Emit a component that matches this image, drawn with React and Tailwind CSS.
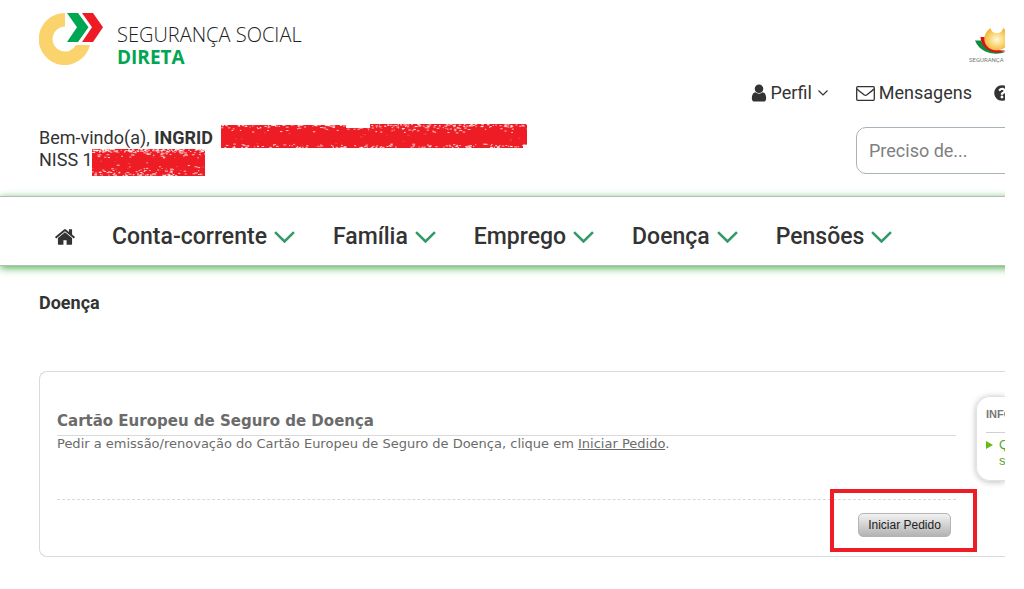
import React from "react";
import { FaQuestionCircle } from "react-icons/fa";

const menuItems = ["Conta-corrente", "Família", "Emprego", "Doença", "Pensões"];

// small repeatable generator, so the brush texture is the same on each render
const makeSpecks = (width, height, topBand, bottomBand, count, seed) => {
  let s = seed;
  const next = () => {
    s = (s * 16807) % 2147483647;
    return s / 2147483647;
  };
  return Array.from({ length: count }, () => {
    const x = next() * width;
    const zone = next();
    const depth = next() * next();
    let y = next() * height;
    if (zone < 0.6) y = depth * topBand;
    else if (zone < 0.9) y = height - 1 - depth * bottomBand;
    return { x, y, w: 1 + next() * 2, o: zone < 0.9 ? 0.75 : 0.18 };
  });
};

const nameSpecks = makeSpecks(306, 24, 9, 4, 400, 71);
const numberSpecks = makeSpecks(113, 27, 9, 13, 300, 29);

const Specks = ({ items }) =>
  items.map((p, i) => (
    <rect key={i} x={p.x} y={p.y} width={p.w} height="1" fill="#fff" opacity={p.o} />
  ));

const Logo = () => (
  <svg width="64" height="52" viewBox="0 0 64 52" className="shrink-0" aria-hidden="true">
    <path d="M26 0A26 26 0 1 0 51 32H37A12.5 12.5 0 1 1 26 13.500Z" fill="#fbd36d" />
    <path d="M28 0h11l10.500 14.200L39 29H28l10-14.800Z" fill="#00a651" />
    <path d="M43 0h11l10 14.200L54 29H43l10-14.800Z" fill="#ed1c24" />
  </svg>
);

const Emblem = () => (
  <svg width="56" height="28" viewBox="0 0 56 28" className="block" aria-hidden="true">
    <defs>
      <radialGradient id="sun" cx="50%" cy="52%" r="55%">
        <stop offset="0" stopColor="#fff8dc" />
        <stop offset="0.45" stopColor="#fbdc85" />
        <stop offset="1" stopColor="#f4b02e" />
      </radialGradient>
    </defs>
    <path d="M0 13.500h6c3 8 9 12.500 25 11-5 2.500-13 3-19 .5C6 23 2 18.500 0 13.500Z" fill="#0a8f3c" />
    <path d="M5.500 10h5c1 8 6 14 20 13.500-4 2.500-10 3-15 .5C9 21.500 6 17 5.500 10Z" fill="#d5121b" />
    <path
      d="M15.500 1C9 6 8 12 10.500 17c4.500 8.500 18 8.500 22.500 0 2.500-5 1.500-11-5-16-1 3.500-2 5-6.200 5S16.500 4.500 15.500 1Z"
      fill="url(#sun)"
    />
  </svg>
);

const UserIcon = () => (
  <svg width="20" height="20" viewBox="0 0 1792 1792" fill="currentColor" aria-hidden="true">
    <path d="M1536 1399q0 109-62.500 187t-150.500 78h-854q-88 0-150.500-78t-62.500-187q0-85 8.500-160.500t31.500-152 58.500-131 94-89 134.500-34.500q131 128 313 128t313-128q76 0 134.500 34.500t94 89 58.500 131 31.500 152 8.500 160.500zm-256-887q0 159-112.500 271.500t-271.500 112.500-271.500-112.500-112.500-271.500 112.500-271.500 271.500-112.500 271.500 112.500 112.500 271.500z" />
  </svg>
);

const HomeIcon = () => (
  <svg width="22" height="22" viewBox="0 0 1792 1792" fill="currentColor" aria-hidden="true">
    <path d="M1472 992v480q0 26-19 45t-45 19h-384v-384h-256v384h-384q-26 0-45-19t-19-45v-480q0-1 .5-3t.5-3l575-474 575 474q1 2 1 6zm223-69l-62 74q-8 9-21 11h-3q-13 0-21-7l-692-577-692 577q-12 8-24 7-13-2-21-11l-62-74q-8-10-7-23.500t11-21.500l719-599q32-26 76-26t76 26l244 204v-195q0-14 9-23t23-9h192q14 0 23 9t9 23v408l219 182q10 8 11 21.500t-7 23.500z" />
  </svg>
);

const Chevron = ({ className, size }) => (
  <svg
    viewBox="0 0 20 12"
    width={size}
    className={className}
    fill="none"
    stroke="currentColor"
    strokeWidth="2.4"
    aria-hidden="true"
  >
    <path d="M1 1l9 9 9-9" />
  </svg>
);

const Envelope = () => (
  <svg
    width="19"
    height="15"
    viewBox="0 0 19 15"
    fill="none"
    stroke="currentColor"
    strokeWidth="1.3"
    aria-hidden="true"
  >
    <rect x="0.7" y="0.7" width="17.600" height="13.600" rx="1" />
    <path d="M1 3c3 3 5 4 7 5.700q1.500 1.200 3 0C13 7 15 6 18 3" />
  </svg>
);

const Header = () => (
  <header className="pl-[39px]">
    <div className="flex items-start justify-between pt-[13px]">
      <a href="#inicio" className="flex items-start gap-[14px]">
        <Logo />
        <span className="flex flex-col pt-2 font-['Open_Sans',sans-serif]">
          <span className="text-[20px] leading-7 font-light text-[#222]">SEGURANÇA SOCIAL</span>
          <span className="text-[19px] leading-4 font-bold text-[#00a651]">DIRETA</span>
        </span>
      </a>
      <div className="w-[36px] pt-[14px]">
        <div className="overflow-hidden pl-[6px]">
          <Emblem />
        </div>
        <span className="block text-[6px] leading-[10px] whitespace-nowrap text-[#777]">
          SEGURANÇA
        </span>
      </div>
    </div>

    <div className="-mr-[5px] flex items-center justify-end gap-7 pt-[17px] text-[18px] leading-[22px]">
      <button type="button" className="flex items-center gap-[2px]">
        <UserIcon />
        Perfil
        <Chevron size="10" className="ml-1" />
      </button>
      <a href="#mensagens" className="flex items-center gap-1">
        <Envelope />
        Mensagens
      </a>
      <a href="#ajuda" aria-label="Ajuda" className="-ml-[6px]">
        <FaQuestionCircle className="size-[16px]" />
      </a>
    </div>

    <div className="flex items-start justify-between pt-[23px]">
      <div className="text-[18px] leading-[22px]">
        <p className="relative w-fit">
          Bem-vindo(a), <strong className="font-bold">INGRID</strong>
          <svg
            width="306"
            height="24"
            className="absolute -top-[3px] left-full ml-2"
            aria-hidden="true"
          >
            <path d="M0 1H125V4H149V0H306V21H302V24H0Z" fill="#ee1c24" />
            <Specks items={nameSpecks} />
          </svg>
        </p>
        <p className="relative w-fit">
          NISS 1
          <svg
            width="113"
            height="27"
            className="absolute top-0 left-full -ml-px"
            aria-hidden="true"
          >
            <rect width="113" height="27" fill="#ee1c24" />
            <Specks items={numberSpecks} />
          </svg>
        </p>
      </div>
      <input
        type="search"
        aria-label="Pesquisa"
        placeholder="Preciso de..."
        className="-mr-[40px] h-[47px] w-[189px] rounded-[10px] border border-[#a9b4ba] px-3 text-[18px] placeholder:text-[#808080]"
      />
    </div>
  </header>
);

const Nav = () => (
  <nav className="relative -mr-4 mt-[22px] flex h-[70px] items-center border-y border-[#b3bdb8] bg-white pt-3 pl-[54px] text-[23px] font-medium shadow-[0_2px_8px_#4caf50]">
    <a href="#inicio" aria-label="Início" className="mr-9">
      <HomeIcon />
    </a>
    <ul className="flex items-center gap-[38px]">
      {menuItems.map((item) => (
        <li key={item}>
          <button type="button" className="flex items-center gap-[7px]">
            {item}
            <Chevron size="21" className="text-[#339966]" />
          </button>
        </li>
      ))}
    </ul>
  </nav>
);

const RequestPanel = () => (
  <section className="flex rounded-l-lg border border-r-0 border-[#d9d9d9] pl-[17px] font-['DejaVu_Sans',sans-serif] text-[#6b6b6b]">
    <div className="min-w-0 flex-1 pt-[39px] pb-[19px]">
      <h2 className="border-b border-[#d9d9d9] pb-[3px] text-[15px] leading-[21px] font-bold">
        Cartão Europeu de Seguro de Doença
      </h2>
      <p className="text-[13px] leading-[15px]">
        Pedir a emissão/renovação do Cartão Europeu de Seguro de Doença, clique em{" "}
        <a href="#pedido" className="underline">
          Iniciar Pedido
        </a>
        .
      </p>
      <div className="mt-12 flex justify-end border-t border-dashed border-[#d9d9d9] pt-[13px] pr-[5px]">
        <div className="relative">
          <button
            type="button"
            className="block h-6 w-[93px] rounded-[5px] border border-[#b5b5b5] bg-linear-to-b from-[#f2f2f2] to-[#b3b3b3] font-['Liberation_Sans',sans-serif] text-[12px] text-[#222]"
          >
            Iniciar Pedido
          </button>
          <span className="pointer-events-none absolute -top-[24px] -right-[26px] -bottom-[15px] -left-[28px] border-4 border-[#ee1c24]" />
        </div>
      </div>
    </div>

    <aside className="mt-[24px] ml-[20px] h-[85px] w-[29px] shrink-0 overflow-hidden rounded-l-[14px] border border-r-0 border-[#e2e2e2] pt-[9px] pl-[9px] font-['Liberation_Sans',sans-serif] text-[12px] whitespace-nowrap shadow-[0_1px_6px_#bbb]">
      <h3 className="border-b border-[#d0d0d0] pb-[10px] text-[11px] leading-4 font-bold text-[#777]">
        INFO
      </h3>
      <a href="#info" className="flex gap-[6px] pt-1 text-[13px] leading-4 text-[#55a51c]">
        <svg width="7" height="8" viewBox="0 0 7 8" className="mt-1 shrink-0" aria-hidden="true">
          <path d="M0 0l7 4-7 4Z" fill="#66bb11" />
        </svg>
        <span>
          Q
          <br />s
        </span>
      </a>
    </aside>
  </section>
);

const App = () => {
  return (
    <div className="mr-[19px] overflow-hidden bg-white pb-8 font-['Roboto',sans-serif] text-[#333]">
      <Header />
      <Nav />
      <main className="pt-[26px] pl-[39px]">
        <h1 className="pb-[57px] text-[18px] leading-[22px] font-bold">Doença</h1>
        <RequestPanel />
      </main>
    </div>
  );
};

export default App;
